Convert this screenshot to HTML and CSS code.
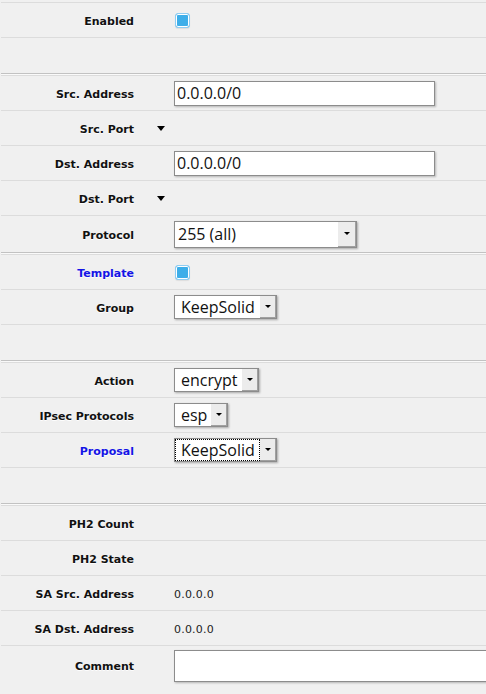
FILE: index.html
```html
<!DOCTYPE html>
<html>
<head>
<meta charset="utf-8">
<link rel="stylesheet" href="styles.css">
</head>
<body>
<div class="form">
  <div class="row first">
    <div class="label">Enabled</div><div class="exp"></div>
    <div class="val"><span class="check"></span></div>
  </div>
  <div class="row empty"></div>
  <div class="sep"></div>

  <div class="row">
    <div class="label">Src. Address</div><div class="exp"></div>
    <div class="val"><span class="input w-addr">0.0.0.0/0</span></div>
  </div>
  <div class="row">
    <div class="label">Src. Port</div><div class="exp"><span class="tri"></span></div>
    <div class="val"></div>
  </div>
  <div class="row">
    <div class="label">Dst. Address</div><div class="exp"></div>
    <div class="val"><span class="input w-addr">0.0.0.0/0</span></div>
  </div>
  <div class="row">
    <div class="label">Dst. Port</div><div class="exp"><span class="tri"></span></div>
    <div class="val"></div>
  </div>
  <div class="row last">
    <div class="label">Protocol</div><div class="exp"></div>
    <div class="val"><span class="select w-proto tall"><span class="txt">255 (all)</span><span class="btn"><span class="arr"></span></span></span></div>
  </div>
  <div class="sep"></div>

  <div class="row">
    <div class="label blue">Template</div><div class="exp"></div>
    <div class="val"><span class="check"></span></div>
  </div>
  <div class="row">
    <div class="label">Group</div><div class="exp"></div>
    <div class="val"><span class="select w-group"><span class="txt">KeepSolid</span><span class="btn"><span class="arr"></span></span></span></div>
  </div>
  <div class="row empty"></div>
  <div class="sep"></div>

  <div class="row">
    <div class="label">Action</div><div class="exp"></div>
    <div class="val"><span class="select w-action"><span class="txt">encrypt</span><span class="btn"><span class="arr"></span></span></span></div>
  </div>
  <div class="row">
    <div class="label">IPsec Protocols</div><div class="exp"></div>
    <div class="val"><span class="select w-esp"><span class="txt">esp</span><span class="btn"><span class="arr"></span></span></span></div>
  </div>
  <div class="row">
    <div class="label blue">Proposal</div><div class="exp"></div>
    <div class="val"><span class="select w-group"><span class="txt focus">KeepSolid</span><span class="btn"><span class="arr"></span></span></span></div>
  </div>
  <div class="row empty"></div>
  <div class="sep"></div>

  <div class="row">
    <div class="label">PH2 Count</div><div class="exp"></div>
    <div class="val"></div>
  </div>
  <div class="row">
    <div class="label">PH2 State</div><div class="exp"></div>
    <div class="val"></div>
  </div>
  <div class="row">
    <div class="label">SA Src. Address</div><div class="exp"></div>
    <div class="val"><span class="static">0.0.0.0</span></div>
  </div>
  <div class="row">
    <div class="label">SA Dst. Address</div><div class="exp"></div>
    <div class="val"><span class="static">0.0.0.0</span></div>
  </div>
  <div class="row comment">
    <div class="label">Comment</div><div class="exp"></div>
    <div class="val"><span class="input w-comment"></span></div>
  </div>
</div>
</body>
</html>
```

FILE: styles.css
```css
html, body {
  margin: 0;
  padding: 0;
  background: #f0f0f0;
  overflow: hidden;
}

.form {
  margin: 2px 0 0 1px;
  font-family: "DejaVu Sans", Verdana, sans-serif;
}

.row {
  display: flex;
  align-items: center;
  height: 34px;
  border-bottom: 1px solid #dcdcdc;
}

.row.first {
  border-top: 1px solid #dcdcdc;
}

.row.empty {
  height: 35px;
  border-bottom: none;
}

.row.last {
  height: 36px;
  border-bottom: none;
}

.row.comment {
  height: 44px;
  border-bottom: none;
  align-items: flex-start;
  padding-top: 4px;
}

.sep {
  height: 1px;
  background: #c2c2c2;
  border-bottom: 1px solid #fafafa;
}

.sep + .row {
  border-top: 1px solid #dcdcdc;
}

.label {
  width: 133px;
  flex: none;
  box-sizing: border-box;
  padding-top: 2px;
  text-align: right;
  font-size: 11px;
  font-weight: bold;
  color: #111;
  text-shadow: 0 1px 0 rgba(255, 255, 255, 0.9);
  white-space: nowrap;
}

.row.comment .label {
  line-height: 32px;
  padding-top: 1px;
}

.label.blue {
  color: #1414e6;
}

.exp {
  width: 40px;
  flex: none;
  display: flex;
  align-items: center;
  padding-left: 23px;
  padding-top: 1px;
  box-sizing: border-box;
}

.tri {
  width: 0;
  height: 0;
  border-left: 4.5px solid transparent;
  border-right: 4.5px solid transparent;
  border-top: 5px solid #000;
}

.val {
  flex: 1;
  display: flex;
  align-items: center;
  min-width: 0;
}

.check {
  display: block;
  width: 13px;
  height: 13px;
  margin-left: 1px;
  border: 1px solid #8fcdf2;
  border-radius: 3px;
  background: #3daee9;
  box-shadow: inset 0 0 0 1px #ffffff, 0 1px 1px rgba(0, 0, 0, 0.08);
}

.input {
  display: block;
  box-sizing: border-box;
  height: 25px;
  background: #fff;
  border: 1px solid #8c8c8c;
  box-shadow: 1px 1px 2px rgba(0, 0, 0, 0.25);
  font-family: "Open Sans", "Noto Sans", sans-serif;
  font-size: 16px;
  line-height: 23px;
  padding-left: 2px;
  color: #111;
}

.w-addr {
  width: 261px;
}

.w-comment {
  width: 330px;
  height: 32px;
  flex: none;
}

.select {
  display: flex;
  box-sizing: border-box;
  height: 24px;
  background: #fff;
  border: 1px solid #8c8c8c;
  box-shadow: 1px 1px 2px rgba(0, 0, 0, 0.3);
  font-family: "Open Sans", "Noto Sans", sans-serif;
  font-size: 16px;
  color: #111;
}

.select.tall {
  height: 27px;
}

.select .txt {
  flex: 1;
  padding-left: 6px;
  line-height: 22px;
  white-space: nowrap;
  overflow: hidden;
}

.select.tall .txt {
  line-height: 25px;
  padding-left: 3px;
}

.select .txt.focus {
  outline: 1px dotted #000;
  outline-offset: -1px;
}

.select .btn {
  width: 15px;
  flex: none;
  background: #ececec;
  border-right: 1px solid #a0a0a0;
  border-bottom: 1px solid #a0a0a0;
  display: flex;
  align-items: center;
  justify-content: center;
}

.select.tall .btn {
  width: 17px;
}

.arr {
  width: 0;
  height: 0;
  border-left: 3px solid transparent;
  border-right: 3px solid transparent;
  border-top: 3px solid #000;
}

.w-proto { width: 183px; }
.w-group { width: 103px; }
.w-action { width: 85px; }
.w-esp { width: 54px; }

.static {
  font-size: 11px;
  color: #222;
  padding-top: 2px;
  letter-spacing: 0.2px;
}
```
